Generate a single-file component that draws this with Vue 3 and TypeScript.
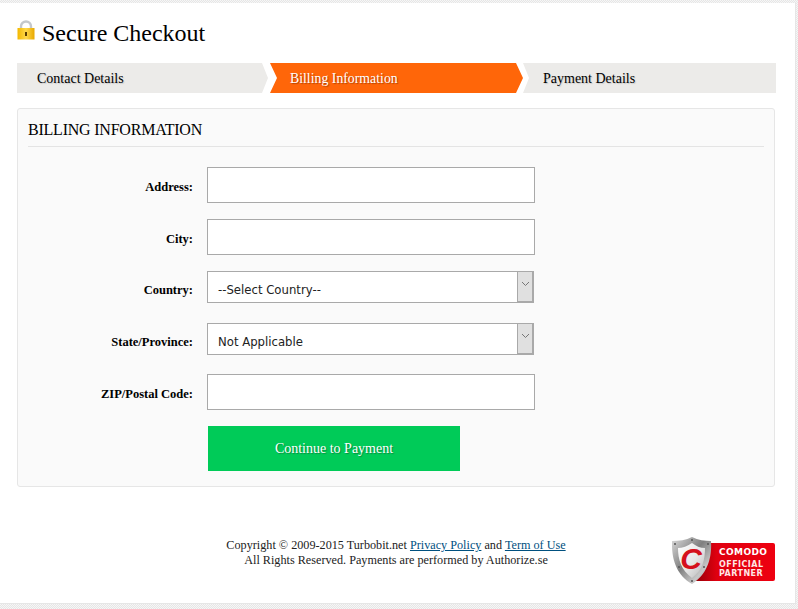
<template>
  <div class="sheet">
    <h1 class="title">
      <svg class="lock" width="18" height="20" viewBox="0 0 18 20">
        <path d="M4 10V6.5a5 5 0 0 1 10 0V10" fill="none" stroke="#c4c8cc" stroke-width="2.4" />
        <rect x="0.5" y="8" width="17" height="11.5" fill="url(#lockFill)" />
        <rect x="8" y="12" width="2" height="4" fill="#5a3d00" />
        <defs>
          <linearGradient id="lockFill" x1="0" y1="0" x2="1" y2="0">
            <stop offset="0" stop-color="#f3b800" />
            <stop offset="0.5" stop-color="#ffd84a" />
            <stop offset="1" stop-color="#e8a800" />
          </linearGradient>
        </defs>
      </svg>
      Secure Checkout
    </h1>

    <div class="steps">
      <div class="step step-first">Contact Details</div>
      <div class="step step-active">Billing Information</div>
      <div class="step step-last">Payment Details</div>
    </div>

    <div class="card">
      <h2 class="card-title">BILLING INFORMATION</h2>

      <form class="form" @submit.prevent>
        <div class="row row-input">
          <label class="label">Address:</label>
          <input class="input" type="text" />
        </div>
        <div class="row row-input">
          <label class="label">City:</label>
          <input class="input" type="text" />
        </div>
        <div v-for="item in selects" :key="item.label" class="row row-select">
          <label class="label">{{ item.label }}</label>
          <div class="select-wrap">
            <select class="select">
              <option>{{ item.value }}</option>
            </select>
            <span class="select-arrow">
              <svg width="9" height="6" viewBox="0 0 9 6">
                <path d="M1 1l3.5 3.5L8 1" fill="none" stroke="#777" stroke-width="1" />
              </svg>
            </span>
          </div>
        </div>
        <div class="row row-input row-zip">
          <label class="label">ZIP/Postal Code:</label>
          <input class="input" type="text" />
        </div>
        <button class="submit" type="submit">Continue to Payment</button>
      </form>
    </div>

    <div class="footer">
      <p class="copy">
        Copyright © 2009-2015 Turbobit.net <a href="#">Privacy Policy</a> and <a href="#">Term of Use</a><br />
        All Rights Reserved. Payments are performed by Authorize.se
      </p>
      <svg class="badge" width="104" height="48" viewBox="0 0 104 48">
        <defs>
          <linearGradient id="badgeRed" x1="0" y1="0" x2="1" y2="0">
            <stop offset="0" stop-color="#8a0006" />
            <stop offset="0.3" stop-color="#e00010" />
            <stop offset="1" stop-color="#ee0010" />
          </linearGradient>
          <linearGradient id="shield" x1="0" y1="0" x2="1" y2="1">
            <stop offset="0" stop-color="#dcdcdc" />
            <stop offset="0.45" stop-color="#7f7f7f" />
            <stop offset="0.75" stop-color="#c8c8c8" />
            <stop offset="1" stop-color="#8a8a8a" />
          </linearGradient>
          <linearGradient id="shieldInner" x1="0" y1="0" x2="1" y2="1">
            <stop offset="0" stop-color="#ffffff" />
            <stop offset="0.55" stop-color="#e6e6e6" />
            <stop offset="1" stop-color="#b4b4b4" />
          </linearGradient>
        </defs>
        <rect x="20" y="6" width="83" height="38" rx="2" fill="url(#badgeRed)" />
        <path d="M20 0C14 3 7 4 0 4C-0.5 20 3 37 20 47C36 37 40 20 39 4C33 4 26 3 20 0Z" fill="url(#shield)" />
        <path d="M20 6C16 9 10 11 6 11C6 22 9 33 20 41C31 33 33 22 33 11C28 11 24 9 20 6Z" fill="url(#shieldInner)" />
        <circle cx="20" cy="3" r="1" fill="#555" />
        <circle cx="3" cy="7" r="1" fill="#555" />
        <circle cx="36" cy="7" r="1" fill="#555" />
        <circle cx="7" cy="30" r="1" fill="#555" />
        <circle cx="32" cy="30" r="1" fill="#555" />
        <circle cx="20" cy="44" r="1" fill="#555" />
        <text x="19" y="32" class="badge-c">C</text>
        <text x="47" y="18" class="badge-big">COMODO</text>
        <text x="47" y="30" class="badge-small">OFFICIAL</text>
        <text x="47" y="39" class="badge-small">PARTNER</text>
      </svg>
    </div>
  </div>
</template>

<script setup lang="ts">
const selects = [
  { label: "Country:", value: "--Select Country--" },
  { label: "State/Province:", value: "Not Applicable" },
];
</script>

<style>
html,
body {
  margin: 0;
  height: 100%;
  background-color: #f2f2f2;
  background-image: repeating-conic-gradient(#e6e6e6 0 25%, #f6f6f6 0 50%);
  background-size: 2px 2px;
  overflow: hidden;
}
</style>

<style scoped>
.sheet {
  box-sizing: border-box;
  width: 796px;
  height: 601px;
  margin-top: 3px;
  padding: 0 19px 0 17px;
  background: #fff;
  border-right: 1px solid #e6e6e6;
  border-bottom: 1px solid #e6e6e6;
  font-family: "Liberation Serif", "Times New Roman", serif;
  color: #000;
}

.title {
  display: flex;
  align-items: center;
  height: 60px;
  margin: 0;
  font-size: 24px;
  font-weight: normal;
  line-height: 28px;
}

.lock {
  margin: -6px 7px 0 0;
}

.steps {
  display: flex;
  width: 759px;
  height: 30px;
}

.step {
  box-sizing: border-box;
  padding-left: 20px;
  background: #ecebe9;
  font-size: 14px;
  line-height: 32px;
  text-shadow: 1px 1px 1px #c8c8c8;
}

.step-first {
  width: 251px;
  margin-right: 2px;
  clip-path: polygon(0 0, 245px 0, 251px 50%, 245px 100%, 0 100%);
}

.step-active {
  width: 253px;
  background: #ff6609;
  color: #fff;
  font-size: 13.8px;
  text-shadow: 1px 1px 1px #b34400;
  clip-path: polygon(0 0, 246px 0, 253px 50%, 246px 100%, 0 100%, 7px 50%);
}

.step-last {
  width: 253px;
  clip-path: polygon(0 0, 100% 0, 100% 100%, 0 100%, 6px 50%);
}

.card {
  box-sizing: border-box;
  width: 758px;
  height: 379px;
  margin-top: 15px;
  padding: 0 10px;
  background: #fafafa;
  border: 1px solid #e6e6e6;
  border-radius: 3px;
}

.card-title {
  height: 37px;
  margin: 0;
  border-bottom: 1px solid #e4e4e4;
  font-size: 16px;
  font-weight: normal;
  letter-spacing: -0.22px;
  line-height: 41px;
}

.form {
  display: flex;
  flex-direction: column;
  padding-top: 20px;
}

.row {
  display: flex;
  align-items: center;
}

.row-input {
  height: 36px;
  margin-bottom: 16px;
}

.row-select {
  height: 32px;
  margin-bottom: 20px;
}

.row-select .label {
  padding-top: 7px;
}

.row-select + .row-zip {
  margin-top: -1px;
}

.label {
  flex: none;
  width: 165px;
  margin-right: 14px;
  padding-top: 5px;
  font-size: 12.5px;
  font-weight: bold;
  text-align: right;
}

.input {
  box-sizing: border-box;
  width: 328px;
  height: 36px;
  padding: 0 10px;
  background: #fff;
  border: 1px solid #a9a9a9;
  border-radius: 0;
  outline: none;
}

.select-wrap {
  position: relative;
  width: 327px;
  height: 32px;
}

.select {
  box-sizing: border-box;
  display: block;
  width: 100%;
  height: 100%;
  padding: 5px 10px 0;
  appearance: none;
  background: #fff;
  border: 1px solid #a9a9a9;
  border-radius: 0;
  outline: none;
  font-family: "DejaVu Sans", Verdana, sans-serif;
  font-size: 11.7px;
  color: #222;
}

.select-arrow {
  position: absolute;
  top: 0;
  right: 0;
  bottom: 0;
  display: flex;
  align-items: center;
  justify-content: center;
  box-sizing: border-box;
  width: 17px;
  padding-bottom: 5px;
  background: #e0e0e0;
  border: 1px solid #a9a9a9;
  border-width: 1px 2px 2px 1px;
  pointer-events: none;
}

.submit {
  width: 252px;
  height: 45px;
  margin: 0 0 0 180px;
  padding: 0;
  background: #00cb58;
  border: 0;
  color: #fff;
  font-family: inherit;
  font-size: 14px;
  text-shadow: 1px 1px 1px #078a40;
}

.footer {
  display: flex;
  justify-content: space-between;
  align-items: flex-start;
  margin-top: 46px;
}

.copy {
  width: 758px;
  margin: 5px -104px 0 0;
  font-size: 12.2px;
  line-height: 15px;
  color: #222;
  text-align: center;
}

.copy a {
  color: #00507f;
}

.badge {
  flex: none;
  margin-top: 4px;
}

.badge-c {
  font-family: "Liberation Sans", sans-serif;
  font-size: 30px;
  font-weight: bold;
  font-style: italic;
  fill: #d5101c;
  text-anchor: middle;
}

.badge-big {
  font-family: "DejaVu Sans", sans-serif;
  font-size: 9px;
  font-weight: bold;
  fill: #fff;
  letter-spacing: 0.4px;
}

.badge-small {
  font-family: "DejaVu Sans", sans-serif;
  font-size: 8px;
  font-weight: bold;
  fill: #ffe6e6;
  letter-spacing: 0.45px;
}
</style>
